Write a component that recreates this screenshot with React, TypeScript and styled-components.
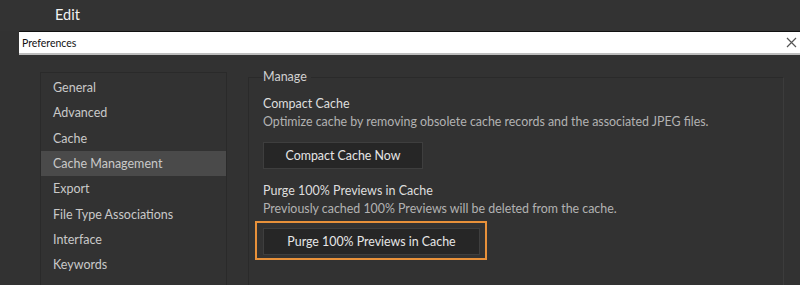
import React from "react";
import styled, { createGlobalStyle } from "styled-components";

const Global = createGlobalStyle`
  html, body { margin: 0; padding: 0; background: #323232; }
  body { font-family: "Lato", "Open Sans", sans-serif; }
  * { box-sizing: border-box; }
`;

const Page = styled.div`
  width: 800px;
  height: 285px;
  background: #323232;
  overflow: hidden;
  display: flex;
  flex-direction: column;
`;

const MenuBar = styled.div`
  height: 31px;
  padding: 0 0 3px 55px;
  display: flex;
  align-items: center;
  color: #f2f2f2;
  font-size: 14.5px;
  background: #333333;
`;

const TitleBar = styled.div`
  margin-left: 19px;
  height: 24px;
  background: #ffffff;
  border-top: 1px solid #111;
  border-bottom: 2px solid #bdbdbd;
  display: flex;
  align-items: center;
  justify-content: space-between;
  padding: 0 3px 0 3px;
  color: #111;
  font-size: 10.5px;
`;

const CloseIcon = styled.svg`
  width: 11px;
  height: 11px;
  stroke: #555;
  stroke-width: 1.2;
`;

const Body = styled.div`
  flex: 1;
  display: flex;
  gap: 21px;
  padding: 16px 16px 0 40px;
`;

const Sidebar = styled.div`
  width: 187px;
  margin-top: 1px;
  border: 1px solid #2a2a2a;
  border-bottom: none;
  padding-top: 2px;
  display: flex;
  flex-direction: column;
`;

const Item = styled.div<{ $active?: boolean }>`
  height: 25.3px;
  display: flex;
  align-items: center;
  padding-left: 12px;
  font-size: 12.5px;
  color: #c9c9c9;
  background: ${(p) => (p.$active ? "#4a4a4a" : "transparent")};
`;

const Group = styled.fieldset`
  flex: 1;
  margin: 0;
  border: 1px solid #2a2a2a;
  border-right-color: #3c3c3c;
  border-bottom: none;
  padding: 0 0 0 14px;
  display: flex;
  flex-direction: column;
`;

const Legend = styled.legend`
  padding: 0 4px 0 0;
  margin-left: 0;
  font-size: 12.5px;
  color: #d0d0d0;
  line-height: 1;
`;

const Title = styled.div`
  font-size: 12.5px;
  color: #dedede;
  line-height: 18px;
`;

const Desc = styled.div`
  font-size: 12.4px;
  color: #b2b2b2;
  line-height: 18px;
`;

const Section = styled.div<{ $top: number }>`
  margin-top: ${(p) => p.$top}px;
  display: flex;
  flex-direction: column;
  align-items: flex-start;
`;

const Focus = styled.div`
  margin: 3px 0 0 -8px;
  padding: 5px 5px 3px 6px;
  border: 2px solid #e8913a;
`;

const Button = styled.button<{ $w: number; $mt?: number }>`
  width: ${(p) => p.$w}px;
  height: 27px;
  margin-top: ${(p) => p.$mt ?? 0}px;
  background: #262626;
  border: 1px solid #3e3e3e;
  color: #e6e6e6;
  font-family: inherit;
  font-size: 12.4px;
  padding: 0;
`;

const items = [
  "General",
  "Advanced",
  "Cache",
  "Cache Management",
  "Export",
  "File Type Associations",
  "Interface",
  "Keywords",
];

export default function App() {
  return (
    <Page>
      <Global />
      <MenuBar>Edit</MenuBar>
      <TitleBar>
        <span>Preferences</span>
        <CloseIcon viewBox="0 0 11 11" fill="none">
          <path d="M1 1L10 10M10 1L1 10" />
        </CloseIcon>
      </TitleBar>
      <Body>
        <Sidebar>
          {items.map((t) => (
            <Item key={t} $active={t === "Cache Management"}>
              {t}
            </Item>
          ))}
        </Sidebar>
        <Group>
          <Legend>Manage</Legend>
          <Section $top={11}>
            <Title>Compact Cache</Title>
            <Desc>Optimize cache by removing obsolete cache records and the associated JPEG files.</Desc>
            <Button $w={160} $mt={11}>Compact Cache Now</Button>
          </Section>
          <Section $top={13}>
            <Title>Purge 100% Previews in Cache</Title>
            <Desc>Previously cached 100% Previews will be deleted from the cache.</Desc>
            <Focus>
              <Button $w={217}>Purge 100% Previews in Cache</Button>
            </Focus>
          </Section>
        </Group>
      </Body>
    </Page>
  );
}
